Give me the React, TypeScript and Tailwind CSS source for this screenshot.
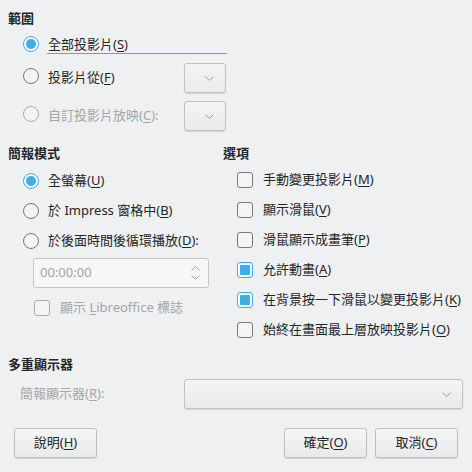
import type { ReactNode } from "react";

function Mn({ children }: { children: ReactNode }) {
  return <span className="underline underline-offset-[2px] decoration-1">{children}</span>;
}

function Radio({ checked = false, disabled = false }: { checked?: boolean; disabled?: boolean }) {
  if (checked) {
    return (
      <div className="w-4 h-4 shrink-0 rounded-full border border-[#3daee9] bg-[#fcfcfc] flex items-center justify-center">
        <div className="w-[10px] h-[10px] rounded-full bg-[#3daee9]" />
      </div>
    );
  }
  return (
    <div
      className={
        disabled
          ? "w-4 h-4 shrink-0 rounded-full border border-[#a9abad] bg-[#f3f4f4]"
          : "w-4 h-4 shrink-0 rounded-full border border-[#76787a] bg-[#f3f4f4]"
      }
    />
  );
}

function Check({ checked = false, disabled = false }: { checked?: boolean; disabled?: boolean }) {
  if (checked) {
    return (
      <div className="w-4 h-4 shrink-0 rounded-[3px] border border-[#3daee9] bg-[#fcfcfc] flex items-center justify-center">
        <div className="w-[10px] h-[10px] rounded-[1px] bg-[#3daee9]" />
      </div>
    );
  }
  return (
    <div
      className={
        disabled
          ? "w-4 h-4 shrink-0 rounded-[3px] border border-[#a9abad] bg-[#f3f4f4]"
          : "w-4 h-4 shrink-0 rounded-[3px] border border-[#76787a] bg-[#f3f4f4]"
      }
    />
  );
}

function Chevron({ up = false }: { up?: boolean }) {
  return (
    <svg width="9" height="5" viewBox="0 0 9 5" fill="none" stroke="#9c9ea0" strokeWidth="1">
      <path d={up ? "M0.5 4.5 4.5 0.5 8.5 4.5" : "M0.5 0.5 4.5 4.5 8.5 0.5"} />
    </svg>
  );
}

function Combo({ className }: { className: string }) {
  return (
    <div
      className={`${className} h-[30px] rounded-[3px] border border-[#bfc1c3] bg-gradient-to-b from-[#f3f4f4] to-[#e9eaeb] shadow-[0_1px_1px_rgba(0,0,0,0.12)] flex items-center justify-end pr-[11px]`}
    >
      <Chevron />
    </div>
  );
}

function Button({ children, className = "" }: { children: ReactNode; className?: string }) {
  return (
    <div
      className={`${className} w-[83px] h-[30px] rounded-[3px] border border-[#bcbec0] bg-gradient-to-b from-[#f4f5f5] to-[#e9eaeb] shadow-[0_1px_1px_rgba(0,0,0,0.12)] flex items-center justify-center`}
    >
      {children}
    </div>
  );
}

export default function App() {
  return (
    <div className="w-[472px] h-[472px] bg-[#eff0f1] text-[13px] text-[#232627] font-['Noto_Sans','Noto_Sans_CJK_TC',sans-serif] pl-2 pt-[9px] overflow-hidden">
      {/* 範圍 */}
      <div className="h-[18px] leading-[18px] font-bold">範圍</div>
      <div className="mt-[3px] h-[28px] flex items-center pl-[15px] w-[219px]">
        <Radio checked />
        <span className="ml-[8px] flex-1 h-[19px] leading-[18px] pl-px border-b border-[#3daee9]">
          全部投影片(<Mn>S</Mn>)
        </span>
      </div>
      <div className="mt-[5px] h-[30px] flex items-center pl-[15px] w-[218px]">
        <div className="-mt-[5px]">
          <Radio />
        </div>
        <span className="ml-[9px] flex-1">
          投影片從(<Mn>F</Mn>)
        </span>
        <Combo className="w-[42px]" />
      </div>
      <div className="mt-[8px] h-[30px] flex items-center pl-[15px] w-[218px]">
        <div className="-mt-[5px]">
          <Radio disabled />
        </div>
        <span className="ml-[9px] flex-1 text-[#a3a5a7]">
          自訂投影片放映(<Mn>C</Mn>):
        </span>
        <Combo className="w-[42px]" />
      </div>

      {/* 簡報模式 / 選項 */}
      <div className="mt-[13px] flex">
        <div className="w-[215px]">
          <div className="h-[18px] leading-[18px] font-bold">簡報模式</div>
          <div className="mt-[4px] h-[30px] flex items-center pl-[15px]">
            <Radio checked />
            <span className="ml-[9px]">
              全螢幕(<Mn>U</Mn>)
            </span>
          </div>
          <div className="h-[30px] flex items-center pl-[15px]">
            <Radio />
            <span className="ml-[9px]">
              於 Impress 窗格中(<Mn>B</Mn>)
            </span>
          </div>
          <div className="h-[30px] flex items-center pl-[15px]">
            <Radio />
            <span className="ml-[9px]">
              於後面時間後循環播放(<Mn>D</Mn>):
            </span>
          </div>
          <div className="mt-[2px] ml-[25px] w-[176px] h-[30px] rounded-[3px] border border-[#c3c5c7] bg-[#f7f7f8] flex items-center pl-[6px] pr-[8px] text-[#a3a5a7]">
            <span className="flex-1">00:00:00</span>
            <div className="flex flex-col gap-[4px]">
              <Chevron up />
              <Chevron />
            </div>
          </div>
          <div className="mt-[5px] h-[30px] flex items-center pl-[26px]">
            <Check disabled />
            <span className="ml-[10px] text-[#a3a5a7]">
              顯示 <Mn>L</Mn>ibreoffice 標誌
            </span>
          </div>
        </div>
        <div className="flex-1">
          <div className="h-[18px] leading-[18px] font-bold">選項</div>
          <div className="mt-[3px] flex flex-col pl-[14px]">
            <div className="h-[30px] flex items-center">
              <Check />
              <span className="ml-[10px]">
                手動變更投影片(<Mn>M</Mn>)
              </span>
            </div>
            <div className="h-[30px] flex items-center">
              <Check />
              <span className="ml-[10px]">
                顯示滑鼠(<Mn>V</Mn>)
              </span>
            </div>
            <div className="h-[30px] flex items-center">
              <Check />
              <span className="ml-[10px]">
                滑鼠顯示成畫筆(<Mn>P</Mn>)
              </span>
            </div>
            <div className="h-[30px] flex items-center">
              <Check checked />
              <span className="ml-[10px]">
                允許動畫(<Mn>A</Mn>)
              </span>
            </div>
            <div className="h-[30px] flex items-center">
              <Check checked />
              <span className="ml-[10px]">
                在背景按一下滑鼠以變更投影片(<Mn>K</Mn>)
              </span>
            </div>
            <div className="h-[30px] flex items-center">
              <Check />
              <span className="ml-[10px]">
                始終在畫面最上層放映投影片(<Mn>O</Mn>)
              </span>
            </div>
          </div>
        </div>
      </div>

      {/* 多重顯示器 */}
      <div className="mt-[10px] h-[18px] leading-[18px] font-bold">多重顯示器</div>
      <div className="mt-[6px] h-[30px] flex items-center pl-[12px]">
        <span className="w-[164px] text-[#a3a5a7]">
          簡報顯示器(<Mn>R</Mn>):
        </span>
        <Combo className="w-[279px]" />
      </div>

      <div className="mt-[19px] flex items-center pl-[6px]">
        <Button>
          說明(<Mn>H</Mn>)
        </Button>
        <Button className="ml-[187px]">
          確定(<Mn>O</Mn>)
        </Button>
        <Button className="ml-[8px]">
          取消(<Mn>C</Mn>)
        </Button>
      </div>
    </div>
  );
}
